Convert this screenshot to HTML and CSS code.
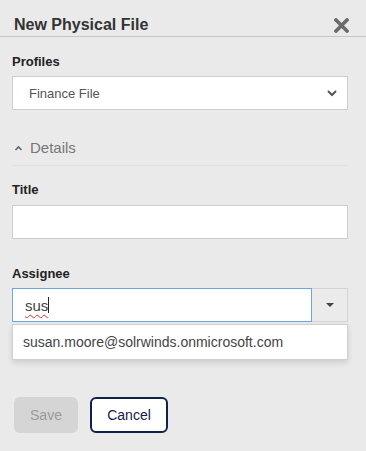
FILE: index.html
```html
<!DOCTYPE html>
<html lang="en">
<head>
  <meta charset="UTF-8" />
  <title>New Physical File</title>
  <link rel="stylesheet" href="styles.css">
</head>
<body>
  <header class="dlg-head">
    <h1>New Physical File</h1>
    <svg class="close" width="15" height="15" viewBox="0 0 15 15">
      <path d="M2 2 L13 13 M13 2 L2 13" stroke="#6b6b6b" stroke-width="3.6" stroke-linecap="square"/>
    </svg>
  </header>

  <main class="dlg-body">
    <label class="lbl">Profiles</label>
    <div class="select">
      <span>Finance File</span>
      <svg width="12" height="8" viewBox="0 0 12 8"><path d="M2 2 L6 6 L10 2" fill="none" stroke="#555" stroke-width="2"/></svg>
    </div>

    <div class="details">
      <svg width="9" height="6" viewBox="0 0 9 6"><path d="M1.5 5 L4.5 2 L7.5 5" fill="none" stroke="#666" stroke-width="1.6"/></svg>
      <span>Details</span>
    </div>

    <label class="lbl">Title</label>
    <div class="field"></div>

    <label class="lbl tight">Assignee</label>
    <div class="combo">
      <div class="field focus"><span class="typo">sus</span><span class="caret"></span></div>
      <div class="drop-btn"><svg width="10" height="6" viewBox="0 0 10 6"><path d="M1 1 L9 1 L5 5 Z" fill="#444"/></svg></div>
    </div>
    <div class="suggest">susan.moore@solrwinds.onmicrosoft.com</div>

    <div class="actions">
      <button class="btn save">Save</button>
      <button class="btn cancel">Cancel</button>
    </div>
  </main>
</body>
</html>
```

FILE: styles.css
```css
body { margin: 0; background: #eaeaea; font-family: "Liberation Sans", Arial, sans-serif; color: #222; }
.dlg-head { display: flex; align-items: flex-start; justify-content: space-between; height: 37px; padding: 0 17px 0 14px; border-bottom: 1px solid #c6c6c6; box-sizing: border-box; }
.dlg-head h1 { margin: 16px 0 0; font-size: 16px; line-height: 18px; font-weight: bold; color: #333; }
.close { margin-top: 18px; }
.dlg-body { padding: 17px 18px 0 12px; }
.lbl { display: block; font-size: 13px; font-weight: bold; color: #222; margin-bottom: 7px; }
.select { display: flex; align-items: center; justify-content: space-between; height: 34px; box-sizing: border-box; background: #fff; border: 1px solid #cdcdcd; padding: 0 9px 0 16px; font-size: 13px; color: #555; }
.details { display: flex; align-items: center; gap: 7px; margin: 29px 0 0; padding: 0 0 9px 2px; border-bottom: 1px solid #e2e2e2; font-size: 15px; color: #777; }
.details + .lbl { margin-top: 16px; }
.details + .lbl { margin-bottom: 8px; }
.field { height: 34px; box-sizing: border-box; background: #fff; border: 1px solid #cdcdcd; margin-bottom: 27px; }
.combo { display: flex; }
.combo .field { flex: 1; margin: 0; border-color: #6aa5e8; display: flex; align-items: center; padding-left: 12px; font-size: 15px; color: #444; }
.typo { text-decoration: underline wavy #e03030; text-decoration-thickness: 1px; text-underline-offset: 3px; }
.caret { width: 1px; height: 16px; background: #222; }
.drop-btn { width: 36px; height: 34px; box-sizing: border-box; border: 1px solid #d4d4d4; border-left: none; display: flex; align-items: center; justify-content: center; background: #ebebeb; }
.suggest { margin-top: 2px; height: 36px; box-sizing: border-box; background: #fff; border: 1px solid #cfcfcf; box-shadow: 0 3px 6px rgba(0,0,0,0.12); padding-left: 10px; display: flex; align-items: center; font-size: 14px; color: #444; }
.actions { display: flex; gap: 12px; margin-top: 37px; padding-left: 2px; }
.btn { height: 36px; border-radius: 6px; font-family: inherit; font-size: 14px; }
.save { width: 64px; background: #d5d5d5; border: none; color: #9a9a9a; }
.cancel { width: 78px; background: #fff; border: 2px solid #13204a; color: #13204a; }
```
